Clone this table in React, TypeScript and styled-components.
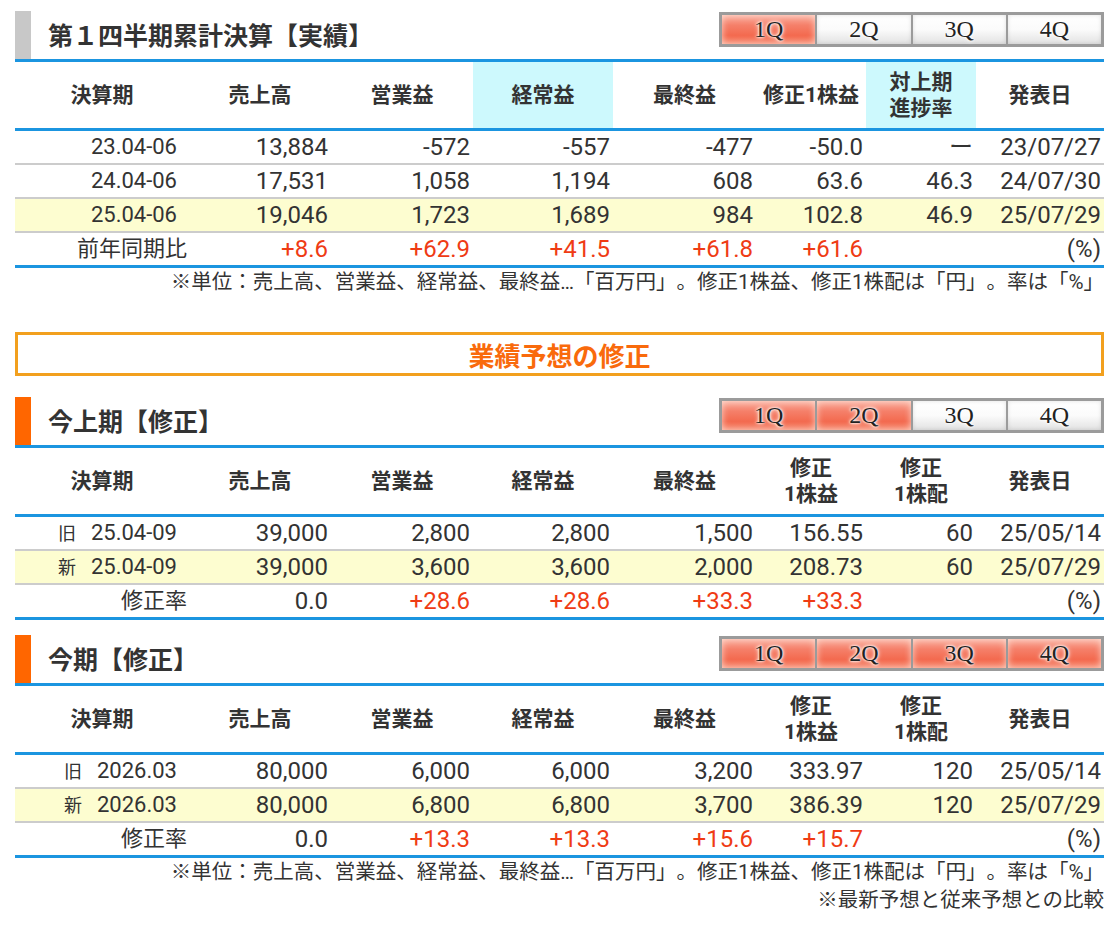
import React from 'react';
import styled, { createGlobalStyle, css } from 'styled-components';

const BLUE = '#1b95e0';
const COLS = [174, 142, 142, 140, 143, 110, 110, 128];

interface Head {
  label: string[];
  hl?: boolean;
}

interface DataRow {
  tag?: string;
  period: string;
  values: string[];
  yellow?: boolean;
}

interface Block {
  title: string;
  bar: string;
  active: number;
  heads: Head[];
  rows: DataRow[];
  diffLabel: string;
  diff: string[];
}

const GlobalStyle = createGlobalStyle`
  body {
    margin: 0;
    background: #fff;
    color: #333;
    font-family: Roboto, "Noto Sans CJK JP", sans-serif;
    text-spacing-trim: space-all;
  }
`;

const Page = styled.div`
  padding: 11px 14px 20px 15px;
`;

const TitleBar = styled.div`
  display: flex;
  justify-content: space-between;
  align-items: flex-start;
  height: 48px;
`;

const Title = styled.h2<{ $bar: string }>`
  margin: 0;
  box-sizing: border-box;
  height: 48px;
  border-left: 16px solid ${p => p.$bar};
  padding: 0 0 6px 17px;
  display: flex;
  align-items: flex-end;
  font-size: 25px;
  line-height: 32px;
  font-weight: 700;
  color: #333;
`;

const Tabs = styled.div`
  display: flex;
  gap: 2px;
  box-sizing: border-box;
  width: 385px;
  height: 35px;
  margin-top: 1px;
  padding: 3px;
  background: #9b9b9b;
`;

const Tab = styled.span<{ $on: boolean }>`
  flex: 1;
  display: flex;
  align-items: center;
  justify-content: center;
  font-family: "Liberation Serif", serif;
  font-size: 24px;
  color: #222;
  text-shadow: 0 0 2px #fff, 0 0 3px #fff, 0 0 5px #fff;
  ${p =>
    p.$on
      ? css`
          background: linear-gradient(#fab0a0 0%, #f5806a 35%, #f36a4f 70%, #f6866c 100%);
          box-shadow: inset 0 0 7px rgba(255, 235, 225, 0.8);
        `
      : css`
          background: linear-gradient(#ffffff 0%, #fbfbfb 50%, #e2e2e2 100%);
          box-shadow: inset 0 0 4px rgba(0, 0, 0, 0.12);
        `}
`;

const Table = styled.table`
  width: 100%;
  table-layout: fixed;
  border-collapse: separate;
  border-spacing: 0;
`;

const Col = styled.col<{ $w: number }>`
  width: ${p => p.$w}px;
`;

const Th = styled.th<{ $hl?: boolean }>`
  box-sizing: border-box;
  height: 72px;
  padding: 0;
  border-top: 3px solid ${BLUE};
  border-bottom: 3px solid ${BLUE};
  background: ${p => (p.$hl ? '#cdf9fd' : '#fff')};
  font-size: 21px;
  line-height: 26px;
  font-weight: 700;
  color: #333;
  text-align: center;
  vertical-align: middle;
`;

const Tr = styled.tr<{ $yellow?: boolean }>`
  background: ${p => (p.$yellow ? '#fdfdd0' : '#fff')};

  &:last-child td {
    height: 35px;
    border-bottom: 3px solid ${BLUE};
  }
`;

const Td = styled.td<{ $kind?: 'period' | 'label'; $red?: boolean }>`
  box-sizing: border-box;
  height: 34px;
  padding: 0 3px 0 0;
  border-bottom: 2px solid #cccccc;
  font-size: 24px;
  line-height: 30px;
  text-align: right;
  white-space: nowrap;
  color: ${p => (p.$red ? '#ef3b14' : '#333')};
  ${p =>
    p.$kind === 'period' &&
    css`
      font-size: 22px;
      padding-right: 12px;
    `}
  ${p =>
    p.$kind === 'label' &&
    css`
      font-size: 22px;
      padding-right: 2px;
    `}
`;

const Tag = styled.span`
  font-size: 18px;
  margin-right: 15px;
`;

const Note = styled.p`
  margin: 0;
  text-align: right;
  font-size: 20.5px;
  line-height: 28px;
  color: #333;
`;

const Banner = styled.div`
  box-sizing: border-box;
  height: 44px;
  margin: 36px 0 21px;
  border: 3px solid #f2a01e;
  display: flex;
  align-items: center;
  justify-content: center;
  color: #f96a0c;
  font-size: 26px;
  font-weight: 700;
`;

const Gap = styled.div`
  height: 15px;
`;

const Q = ['1Q', '2Q', '3Q', '4Q'];

const UNIT_NOTE =
  '※単位：売上高、営業益、経常益、最終益…「百万円」。修正1株益、修正1株配は「円」。率は「%」';

const reviseHeads: Head[] = [
  { label: ['決算期'] },
  { label: ['売上高'] },
  { label: ['営業益'] },
  { label: ['経常益'] },
  { label: ['最終益'] },
  { label: ['修正', '1株益'] },
  { label: ['修正', '1株配'] },
  { label: ['発表日'] },
];

const actual: Block = {
  title: '第１四半期累計決算【実績】',
  bar: '#c8c8c8',
  active: 1,
  heads: [
    { label: ['決算期'] },
    { label: ['売上高'] },
    { label: ['営業益'] },
    { label: ['経常益'], hl: true },
    { label: ['最終益'] },
    { label: ['修正1株益'] },
    { label: ['対上期', '進捗率'], hl: true },
    { label: ['発表日'] },
  ],
  rows: [
    { period: '23.04-06', values: ['13,884', '-572', '-557', '-477', '-50.0', 'ー', '23/07/27'] },
    { period: '24.04-06', values: ['17,531', '1,058', '1,194', '608', '63.6', '46.3', '24/07/30'] },
    { period: '25.04-06', values: ['19,046', '1,723', '1,689', '984', '102.8', '46.9', '25/07/29'], yellow: true },
  ],
  diffLabel: '前年同期比',
  diff: ['+8.6', '+62.9', '+41.5', '+61.8', '+61.6', '', '(%)'],
};

const half: Block = {
  title: '今上期【修正】',
  bar: '#ff6600',
  active: 2,
  heads: reviseHeads,
  rows: [
    { tag: '旧', period: '25.04-09', values: ['39,000', '2,800', '2,800', '1,500', '156.55', '60', '25/05/14'] },
    { tag: '新', period: '25.04-09', values: ['39,000', '3,600', '3,600', '2,000', '208.73', '60', '25/07/29'], yellow: true },
  ],
  diffLabel: '修正率',
  diff: ['0.0', '+28.6', '+28.6', '+33.3', '+33.3', '', '(%)'],
};

const full: Block = {
  title: '今期【修正】',
  bar: '#ff6600',
  active: 4,
  heads: reviseHeads,
  rows: [
    { tag: '旧', period: '2026.03', values: ['80,000', '6,000', '6,000', '3,200', '333.97', '120', '25/05/14'] },
    { tag: '新', period: '2026.03', values: ['80,000', '6,800', '6,800', '3,700', '386.39', '120', '25/07/29'], yellow: true },
  ],
  diffLabel: '修正率',
  diff: ['0.0', '+13.3', '+13.3', '+15.6', '+15.7', '', '(%)'],
};

const ResultTable = ({ block }: { block: Block }) => (
  <>
    <TitleBar>
      <Title $bar={block.bar}>{block.title}</Title>
      <Tabs>
        {Q.map((q, i) => (
          <Tab key={q} $on={i < block.active}>
            {q}
          </Tab>
        ))}
      </Tabs>
    </TitleBar>
    <Table>
      <colgroup>
        {COLS.map((w, i) => (
          <Col key={i} $w={w} />
        ))}
      </colgroup>
      <thead>
        <tr>
          {block.heads.map((h, i) => (
            <Th key={i} $hl={h.hl}>
              {h.label.map((l, j) => (
                <React.Fragment key={j}>
                  {j > 0 && <br />}
                  {l}
                </React.Fragment>
              ))}
            </Th>
          ))}
        </tr>
      </thead>
      <tbody>
        {block.rows.map((r, i) => (
          <Tr key={i} $yellow={r.yellow}>
            <Td $kind="period">
              {r.tag && <Tag>{r.tag}</Tag>}
              {r.period}
            </Td>
            {r.values.map((v, j) => (
              <Td key={j}>{v}</Td>
            ))}
          </Tr>
        ))}
        <Tr>
          <Td $kind="label">{block.diffLabel}</Td>
          {block.diff.map((v, j) => (
            <Td key={j} $red={v.startsWith('+')}>
              {v}
            </Td>
          ))}
        </Tr>
      </tbody>
    </Table>
  </>
);

export default function App() {
  return (
    <Page>
      <GlobalStyle />
      <ResultTable block={actual} />
      <Note>{UNIT_NOTE}</Note>
      <Banner>業績予想の修正</Banner>
      <ResultTable block={half} />
      <Gap />
      <ResultTable block={full} />
      <Note>{UNIT_NOTE}</Note>
      <Note>※最新予想と従来予想との比較</Note>
    </Page>
  );
}
